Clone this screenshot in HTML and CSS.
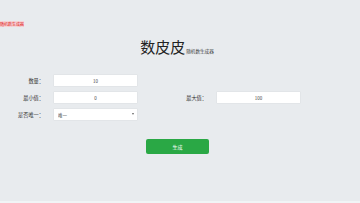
FILE: index.html
```html
<!DOCTYPE html>
<html>
	<head>
		<meta charset="UTF-8">
		<title>数皮皮</title>
		<link rel="stylesheet" href="styles.css">
	</head>
	<body>
		<div class="page">
			<div class="crumb"><span>随机数生成器</span></div>
			<h1 class="title">数皮皮<small>随机数生成器</small></h1>
			<div class="form">
				<label for="count">数量：</label>
				<input type="text" id="count" value="10"/>
				<span></span>
				<span></span>

				<label for="min">最小值：</label>
				<input type="text" id="min" value="0"/>
				<label for="max">最大值：</label>
				<input type="text" id="max" value="100"/>

				<label for="uniq">是否唯一：</label>
				<div class="select">
					<select id="uniq">
						<option>唯一</option>
						<option>可重复</option>
					</select>
				</div>
			</div>
			<button class="btn" id="btn">生成</button>
		</div>
	</body>
</html>
```

FILE: styles.css
```css
*{
	margin: 0;
	padding: 0;
	box-sizing: border-box;
}
html{
	background: #f1f4f6;
}
body{
	font-family: "Noto Sans CJK SC", "Noto Sans", sans-serif;
	color: #333;
}
.page{
	height: 201px;
	background: #e8ebee;
	padding-top: 21px;
}
.crumb{
	height: 6px;
	font-size: 4px;
	line-height: 6px;
	color: #e02020;
}
.crumb span{
	display: inline-block;
	background: #f6d3d6;
}
.title{
	margin-top: 10px;
	text-align: center;
	font-size: 15px;
	font-weight: normal;
	line-height: 20px;
	color: #222;
	padding-right: 6px;
}
.title small{
	font-size: 4.6px;
	color: #444;
	margin-left: 1px;
}
.form{
	display: grid;
	grid-template-columns: 45px 85px 62px 85px;
	column-gap: 8px;
	row-gap: 4px;
	margin-top: 13px;
	align-items: center;
}
.form label{
	text-align: right;
	font-size: 5.2px;
	color: #333;
	padding-right: 1px;
}
.form input,
.form select{
	width: 100%;
	height: 13px;
	border: 1px solid #e2e5e8;
	border-radius: 1px;
	background: #fff;
	font-family: inherit;
	font-size: 4.5px;
	color: #444;
	outline: none;
}
.form input{
	text-align: center;
}
.select{
	position: relative;
}
.form select{
	display: block;
	appearance: none;
	-webkit-appearance: none;
	padding-left: 4px;
}
.select:after{
	content: '';
	position: absolute;
	right: 4px;
	top: 5px;
	width: 0;
	height: 0;
	border-left: 1.5px solid transparent;
	border-right: 1.5px solid transparent;
	border-top: 2px solid #666;
}
.btn{
	display: block;
	width: 63px;
	height: 15px;
	margin: 18px 0 0 146px;
	border: none;
	border-radius: 2px;
	background: #2aa845;
	color: #fff;
	font-family: inherit;
	font-size: 5px;
}
```
